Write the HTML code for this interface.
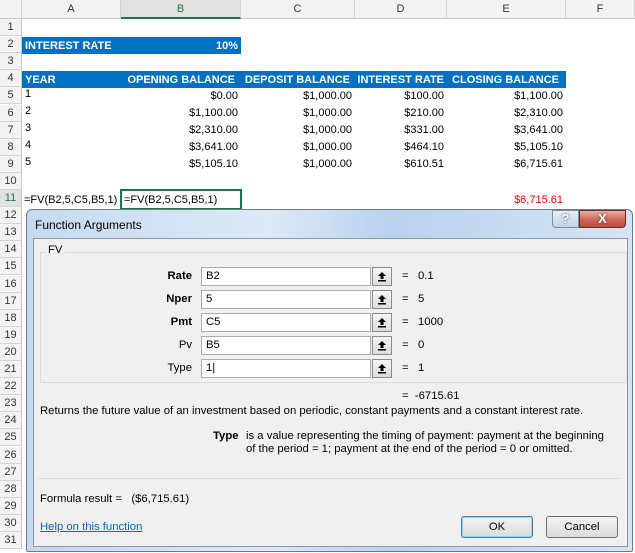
<!DOCTYPE html>
<html><head><style>
body{margin:0;width:635px;height:553px;overflow:hidden;background:#fff;font-family:"Liberation Sans",sans-serif;font-size:11px;position:relative}
.a{position:absolute;white-space:nowrap}
.hl{position:absolute;background:#d4d4d4}
.ch{position:absolute;top:0;height:19px;background:#f3f3f3;border-right:1px solid #d4d4d4;border-bottom:1px solid #c8c8c8;text-align:center;line-height:19px;color:#333;font-size:11px;box-sizing:border-box}
.rn{position:absolute;left:0;width:22px;height:17px;background:#f3f3f3;border-bottom:1px solid #d4d4d4;border-right:1px solid #c8c8c8;box-sizing:border-box;text-align:center;line-height:16px;color:#333;font-size:11px}
.r{text-align:right}
.dl{font-size:11.3px}
.inp{position:absolute;left:201px;width:170px;height:19px;border:1px solid #acacac;background:#fff;box-sizing:border-box;padding-left:4px;line-height:17px;font-size:11.3px}
.ub{position:absolute;left:372px;width:20px;height:19px;border:1px solid #8a8a8a;background:linear-gradient(#f6f6f6,#dcdcdc);box-sizing:border-box}
.ub svg{position:absolute;left:4px;top:3px}
.lab{position:absolute;width:152px;left:40px;text-align:right;font-weight:bold;font-size:11.3px}
.btn{position:absolute;top:516px;height:22px;width:72px;border:1px solid #707070;border-radius:3px;background:linear-gradient(#f2f2f2,#dcdcdc);box-sizing:border-box;text-align:center;line-height:20px;font-size:11.3px}
</style></head><body>
<div class="ch" style="left:0;width:22px"></div>
<div class="ch" style="left:22px;width:99px">A</div>
<div class="ch" style="left:121px;width:120px;background:#e1e1e1;border-bottom:2px solid #217346;color:#217346">B</div>
<div class="ch" style="left:241px;width:114px">C</div>
<div class="ch" style="left:355px;width:92px">D</div>
<div class="ch" style="left:447px;width:119px">E</div>
<div class="ch" style="left:566px;width:69px">F</div>
<div id="rows"></div>
<script>
var h='';for(var i=1;i<=31;i++){var t=19+(i-1)*17.1;h+='<div class="rn" style="top:'+t+'px;'+(i==11?'background:#e1e1e1;color:#217346':'')+'">'+i+'</div>';}
document.getElementById('rows').innerHTML=h;
</script>
<div class="a" style="left:22px;top:37px;width:219px;height:17px;background:#0070c0"></div>
<div class="a" style="left:25px;top:38px;color:#fff;font-weight:bold;line-height:16px">INTEREST RATE</div>
<div class="a r" style="left:180px;width:58px;top:38px;color:#fff;font-weight:bold;line-height:16px">10%</div>
<div class="a" style="left:22px;top:71px;width:544px;height:17px;background:#0070c0"></div>
<div class="a" style="left:25px;top:72px;color:#fff;font-weight:bold;line-height:16px">YEAR</div>
<div class="a r" style="left:121px;width:114px;top:72px;color:#fff;font-weight:bold;line-height:16px">OPENING BALANCE</div>
<div class="a r" style="left:241px;width:109px;top:72px;color:#fff;font-weight:bold;line-height:16px">DEPOSIT BALANCE</div>
<div class="a r" style="left:355px;width:89px;top:72px;color:#fff;font-weight:bold;line-height:16px">INTEREST RATE</div>
<div class="a r" style="left:447px;width:112px;top:72px;color:#fff;font-weight:bold;line-height:16px">CLOSING BALANCE</div>
<div id="data"></div>
<script>
var d=[["1","$0.00","$1,000.00","$100.00","$1,100.00"],["2","$1,100.00","$1,000.00","$210.00","$2,310.00"],["3","$2,310.00","$1,000.00","$331.00","$3,641.00"],["4","$3,641.00","$1,000.00","$464.10","$5,105.10"],["5","$5,105.10","$1,000.00","$610.51","$6,715.61"]];
var s='';d.forEach(function(r,i){var t=90+i*17.1;s+='<div class="a" style="left:25px;top:'+(t-2)+'px">'+r[0]+'</div>'+
'<div class="a r" style="left:121px;width:117px;top:'+t+'px">'+r[1]+'</div>'+
'<div class="a r" style="left:241px;width:111px;top:'+t+'px">'+r[2]+'</div>'+
'<div class="a r" style="left:355px;width:89px;top:'+t+'px">'+r[3]+'</div>'+
'<div class="a r" style="left:447px;width:116px;top:'+t+'px">'+r[4]+'</div>'});
document.getElementById('data').innerHTML=s;
</script>
<div class="a" style="left:24px;top:194px">=FV(B2,5,C5,B5,1)</div>
<div class="a" style="left:120px;top:189px;width:122px;height:21px;border:2px solid #217346;box-sizing:border-box"></div>
<div class="a" style="left:124px;top:194px">=FV(B2,5,C5,B5,1)</div>
<div class="a r" style="left:447px;width:116px;top:194px;color:#ff0000">$6,715.61</div>

<!-- dialog -->
<div class="a" style="left:26px;top:209px;width:607px;height:343px;border:1px solid #6b7b8f;border-radius:6px 6px 2px 2px;background:linear-gradient(90deg,#c5daf0,#dde9f6 40%,#b9d2ee 60%,#d6e5f5);box-sizing:border-box"></div>
<div class="a" style="left:35px;top:218px;font-size:12px;color:#000">Function Arguments</div>
<div class="a" style="left:552px;top:210px;width:27px;height:18px;border:1px solid #7d8da3;border-radius:0 0 0 4px;background:linear-gradient(#e6eef8,#c4d4e8);box-sizing:border-box;text-align:center;color:#fff;font-weight:bold;line-height:16px;font-size:13px;text-shadow:0 0 2px #334">?</div>
<div class="a" style="left:579px;top:210px;width:47px;height:18px;border:1px solid #6d2c25;border-radius:0 0 4px 0;background:linear-gradient(#e8b0a4,#cf6b5c 50%,#c0483b);box-sizing:border-box;text-align:center;color:#fff;font-weight:bold;line-height:16px;font-size:13px;text-shadow:0 0 2px #622">X</div>
<div class="a" style="left:33px;top:238px;width:595px;height:309px;background:#f0f0f0;border:1px solid #8898ab;box-sizing:border-box"></div>
<div class="a" style="left:40px;top:252px;width:587px;height:131px;border:1px solid #dcdcdc;box-sizing:border-box"></div>
<div class="a dl" style="left:45px;top:244px;background:#f0f0f0;padding:0 3px">FV</div>
<div class="lab" style="top:270px">Rate</div>
<div class="lab" style="top:293px">Nper</div>
<div class="lab" style="top:316px">Pmt</div>
<div class="lab" style="top:339px;font-weight:normal">Pv</div>
<div class="lab" style="top:362px;font-weight:normal">Type</div>
<div id="inps"></div>
<script>
var v=["B2","5","C5","B5","1|"],e=["0.1","5","1000","0","1"],q='';
v.forEach(function(x,i){var t=267+i*23;q+='<div class="inp" style="top:'+t+'px">'+x+'</div><div class="ub" style="top:'+t+'px"><svg width="10" height="11" viewBox="0 0 10 11"><path d="M5 1L1 5H3.5V8H6.5V5H9Z" fill="#000"/><rect x="1" y="9" width="8" height="1.5" fill="#000"/></svg></div><div class="a dl" style="left:402px;top:'+(t+3)+'px">=&nbsp;&nbsp;&nbsp;'+e[i]+'</div>'});
document.getElementById('inps').innerHTML=q;
</script>
<div class="a dl" style="left:402px;top:390px">=&nbsp;&nbsp;-6715.61</div>
<div class="a dl" style="left:40px;top:405px">Returns the future value of an investment based on periodic, constant payments and a constant interest rate.</div>
<div class="a dl" style="left:213px;top:430px;font-weight:bold">Type</div>
<div class="a dl" style="left:246px;top:430px;line-height:13px">is a value representing the timing of payment: payment at the beginning<br>of the period = 1; payment at the end of the period = 0 or omitted.</div>
<div class="a" style="left:38px;top:478px;width:582px;height:1px;background:#d8dee6"></div>
<div class="a dl" style="left:40px;top:493px">Formula result =&nbsp;&nbsp;&nbsp;($6,715.61)</div>
<div class="a dl" style="left:40px;top:521px;color:#0066cc;text-decoration:underline">Help on this function</div>
<div class="btn" style="left:461px;border-color:#3c7fb1;box-shadow:inset 0 0 0 1px #9fd0f0">OK</div>
<div class="btn" style="left:546px">Cancel</div>
</body></html>
